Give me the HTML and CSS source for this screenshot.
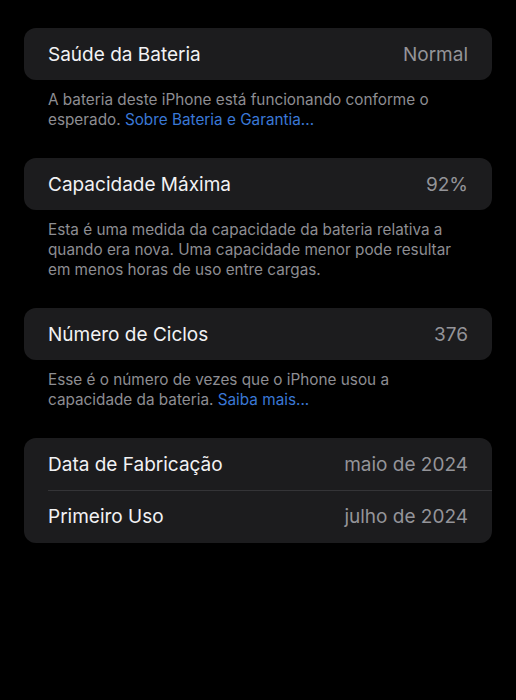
FILE: index.html
```html
<!DOCTYPE html>
<html>
  <head>
    <title>Bateria</title>
    <link rel="stylesheet" href="styles.css">
  </head>
  <body>
    <div class="page">
      <div class="group">
        <div class="row">
          <span class="label">Saúde da Bateria</span>
          <span class="value">Normal</span>
        </div>
      </div>
      <p class="note">A bateria deste iPhone está funcionando conforme o esperado. <a href="#">Sobre Bateria e Garantia...</a></p>

      <div class="group">
        <div class="row">
          <span class="label">Capacidade Máxima</span>
          <span class="value">92%</span>
        </div>
      </div>
      <p class="note">Esta é uma medida da capacidade da bateria relativa a quando era nova. Uma capacidade menor pode resultar em menos horas de uso entre cargas.</p>

      <div class="group">
        <div class="row">
          <span class="label">Número de Ciclos</span>
          <span class="value">376</span>
        </div>
      </div>
      <p class="note">Esse é o número de vezes que o iPhone usou a capacidade da bateria. <a href="#">Saiba mais...</a></p>

      <div class="group">
        <div class="row">
          <span class="label">Data de Fabricação</span>
          <span class="value">maio de 2024</span>
        </div>
        <div class="row">
          <span class="label">Primeiro Uso</span>
          <span class="value">julho de 2024</span>
        </div>
      </div>
    </div>
  </body>
</html>
```

FILE: styles.css
```css
body {
  background-color: #000;
  color: #FFF;
  font-family: 'Inter', sans-serif;
  margin: 0;
}
.page {
  padding: 28px 24px;
}
.group {
  background-color: #1c1c1e;
  border-radius: 12px;
  overflow: hidden;
}
.row {
  display: flex;
  justify-content: space-between;
  align-items: center;
  height: 52px;
  padding: 0 24px;
  font-size: 19px;
  position: relative;
}
.row + .row {
  height: 53px;
}
.row + .row::before {
  content: "";
  position: absolute;
  top: 0;
  left: 24px;
  right: 0;
  border-top: 1px solid #343437;
}
.label {
  color: #f2f2f4;
}
.value {
  color: #949499;
}
.note {
  margin: 10px 32px 28px 24px;
  font-size: 15.3px;
  line-height: 20px;
  color: #8d8d92;
}
.note a {
  color: #3a78d6;
  text-decoration: none;
}
```
